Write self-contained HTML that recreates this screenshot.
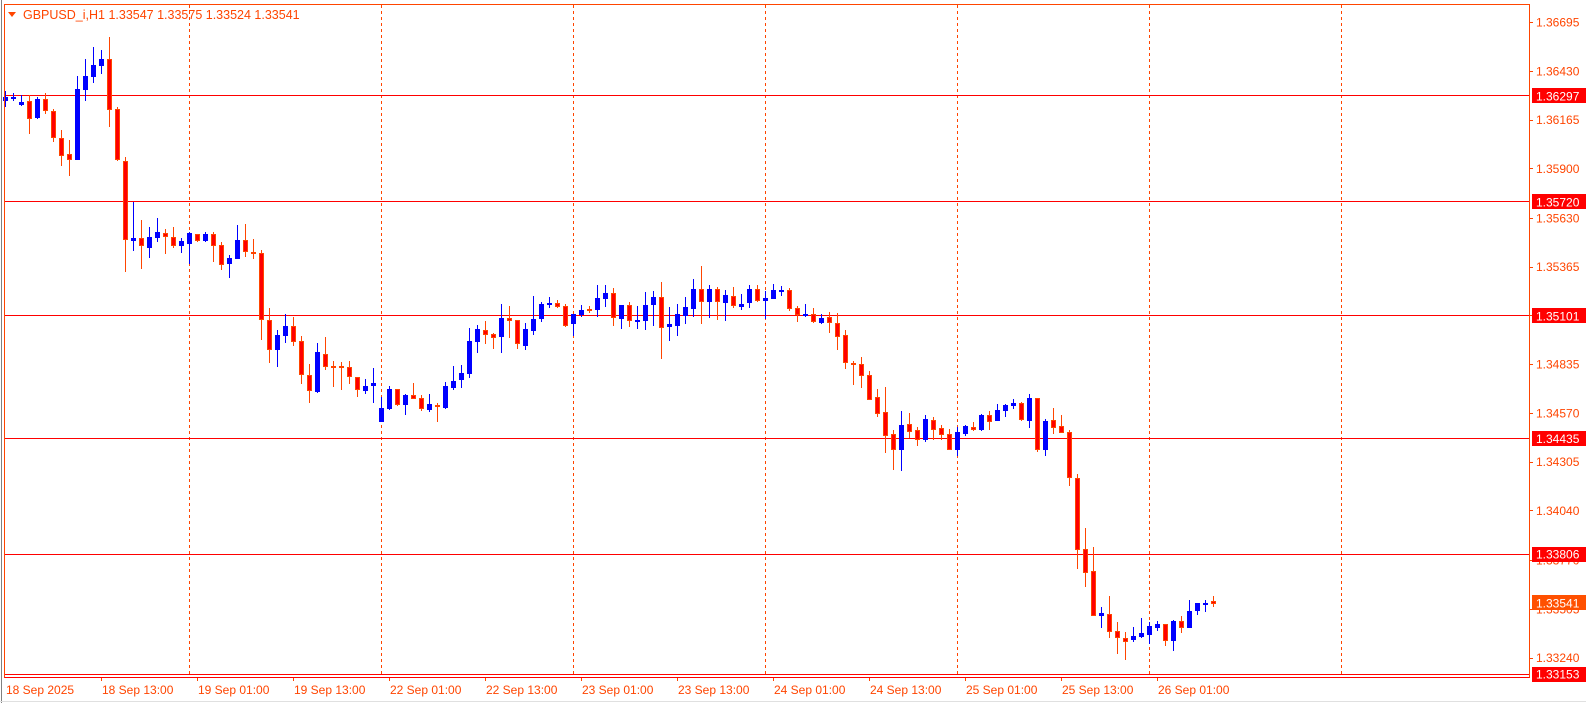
<!DOCTYPE html>
<html><head><meta charset="utf-8"><style>
html,body{margin:0;padding:0;background:#fff;width:1586px;height:703px;overflow:hidden}
svg{display:block}
text{font-family:"Liberation Sans",sans-serif;font-size:12px}
</style></head><body>
<svg id="s" width="1586" height="703" viewBox="0 0 1586 703" xmlns="http://www.w3.org/2000/svg">
<rect x="0" y="0" width="1586" height="703" fill="#fff"/>
<line x1="1.5" y1="0" x2="1.5" y2="703" stroke="#808080"/>
<line x1="0" y1="701.5" x2="1586" y2="701.5" stroke="#e0e0e0"/>
<g stroke="#ff4500" stroke-dasharray="3,3">
<line x1="189.5" y1="5" x2="189.5" y2="677"/><line x1="381.5" y1="5" x2="381.5" y2="677"/>
<line x1="573.5" y1="5" x2="573.5" y2="677"/><line x1="765.5" y1="5" x2="765.5" y2="677"/>
<line x1="957.5" y1="5" x2="957.5" y2="677"/><line x1="1149.5" y1="5" x2="1149.5" y2="677"/>
<line x1="1341.5" y1="5" x2="1341.5" y2="677"/>
</g>
<g stroke="#ff0000">
<line x1="5" y1="95.5" x2="1529" y2="95.5"/><line x1="5" y1="201.5" x2="1529" y2="201.5"/>
<line x1="5" y1="315.5" x2="1529" y2="315.5"/><line x1="5" y1="438.5" x2="1529" y2="438.5"/>
<line x1="5" y1="554.5" x2="1529" y2="554.5"/><line x1="5" y1="674.5" x2="1529" y2="674.5"/>
</g>
<g id="c"></g>
<rect x="4.5" y="4.5" width="1525" height="673" fill="none" stroke="#ff4500"/>
<line x1="4.5" y1="677.5" x2="1529.5" y2="677.5" stroke="#ff0000"/>
<polygon points="8,12 16,12 12,17" fill="#ff4500"/>
<text x="23" y="19" fill="#ff4500" style="font-size:12.5px">GBPUSD_i,H1  1.33547 1.33575 1.33524 1.33541</text>
<g id="ax" fill="#ff4500"></g>
<g id="bx" fill="#ff4500"></g>
</svg>
<script>
var NS="http://www.w3.org/2000/svg",g=document.getElementById('c');
function el(p,t,a){var e=document.createElementNS(NS,t);for(var k in a)e.setAttribute(k,a[k]);p.appendChild(e);return e;}
var B=[[0,97,101,91,107],[1,97,98,93,101],[2,102,105,95,106],[4,99,118,97,119],[9,89,160,76,160],[10,76,90,59,101],[11,65,77,47,83],[12,59,66,50,74],[16,238,241,202,251],[18,237,248,227,258],[19,232,238,218,242],[22,241,246,238,253],[23,233,244,232,264],[25,234,241,232,242],[28,258,264,255,278],[29,240,259,225,259],[34,335,350,330,367],[35,326,336,314,343],[39,352,392,343,393],[45,386,391,379,394],[46,383,386,368,403],[47,408,422,397,422],[48,389,409,386,410],[50,395,405,394,415],[53,404,410,394,412],[55,386,408,382,409],[56,381,388,366,390],[57,373,380,365,388],[58,341,374,328,378],[59,329,342,325,353],[62,318,337,304,353],[65,329,346,323,350],[66,319,331,296,335],[67,304,319,302,322],[68,303,305,297,308],[71,314,324,314,336],[72,310,315,305,317],[74,298,310,285,317],[75,293,299,285,307],[77,305,319,305,329],[79,320,321,306,329],[80,305,321,292,330],[81,297,305,291,326],[83,324,327,307,341],[84,314,326,304,336],[85,307,316,297,324],[86,289,309,279,317],[88,289,302,285,318],[90,295,303,290,321],[92,304,307,294,310],[93,289,303,285,308],[95,298,301,291,319],[96,290,299,284,299],[97,290,292,286,296],[100,314,316,304,317],[102,318,323,314,324],[112,425,450,411,471],[115,419,440,415,442],[119,432,450,427,456],[120,426,434,425,436],[122,415,430,414,431],[124,410,421,404,421],[125,405,411,404,417],[126,403,406,399,409],[128,398,421,394,428],[130,421,450,419,456],[137,613,616,607,628],[141,636,640,627,642],[142,633,637,618,638],[143,626,635,622,644],[144,624,628,621,631],[146,621,641,620,651],[148,611,628,600,628],[149,603,611,603,615],[150,603,604,600,612]];
var R=[[3,101,119,95,134],[5,99,111,93,114],[6,111,138,109,142],[7,138,156,130,166],[8,154,160,140,176],[13,59,110,37,127],[14,109,160,107,161],[15,161,240,157,272],[17,238,246,220,269],[20,233,237,229,254],[21,237,246,227,248],[24,234,241,234,242],[26,234,246,232,262],[27,245,265,242,270],[30,240,252,224,257],[31,252,254,239,259],[32,253,320,250,340],[33,320,350,308,363],[36,326,342,317,346],[37,341,375,336,384],[38,375,391,364,403],[40,354,367,337,370],[41,366,367,361,387],[42,366,367,362,390],[43,367,377,361,384],[44,377,390,377,397],[49,389,405,389,406],[51,395,399,383,399],[52,398,409,395,411],[54,405,407,403,422],[60,330,335,321,344],[61,334,338,333,349],[63,318,321,306,338],[64,320,344,320,349],[69,303,307,300,308],[70,306,326,304,327],[73,309,310,306,313],[76,293,318,288,326],[78,305,321,302,327],[82,297,328,282,359],[87,289,302,266,324],[89,289,302,287,320],[91,296,306,287,308],[94,289,301,285,302],[98,290,309,288,311],[99,308,315,306,322],[101,314,322,308,323],[103,317,323,312,333],[104,323,337,313,350],[105,335,363,330,369],[106,363,364,361,385],[107,364,376,357,388],[108,375,400,371,400],[109,397,414,389,417],[110,412,436,387,453],[111,434,450,430,470],[113,424,432,413,438],[114,430,440,427,446],[116,420,430,417,440],[117,428,435,425,440],[118,434,450,429,450],[121,427,430,422,431],[123,415,422,411,430],[127,403,420,402,421],[129,398,450,398,452],[131,420,428,408,434],[132,426,433,415,433],[133,432,478,430,486],[134,478,550,474,569],[135,549,573,528,587],[136,571,616,547,616],[138,614,632,596,638],[139,631,638,622,654],[140,638,642,632,660],[145,624,641,624,646],[147,621,628,616,633],[151,601,604,596,607]];
B.forEach(function(d){var c=5.5+8*d[0];el(g,'line',{x1:c,x2:c,y1:d[3],y2:d[4],stroke:'#0000ff'});el(g,'rect',{x:c-2.5,y:d[1],width:5,height:Math.max(2,d[2]-d[1]),fill:'#0000ff'});});
R.forEach(function(d){var c=5.5+8*d[0];el(g,'line',{x1:c,x2:c,y1:d[3],y2:d[4],stroke:'#ff4500'});var h=d[2]-d[1];if(h<2){el(g,'rect',{x:c-2.5,y:d[1],width:5,height:2,fill:'#ff4500'});}else{el(g,'rect',{x:c-2,y:d[1]+0.5,width:4,height:h-1,fill:'#ff0000',stroke:'#ff4500'});}});
var ax=document.getElementById('ax');
function py(p){return 95.3+(1.36297-p)*18395;}
['1.36695','1.36430','1.36165','1.35900','1.35630','1.35365','1.35100','1.34835','1.34570','1.34305','1.34040','1.33770','1.33505','1.33240'].forEach(function(v){var y=py(parseFloat(v));el(ax,'rect',{x:1529,y:Math.round(y),width:4,height:1});var t=el(ax,'text',{x:1536,y:y+4.5});t.textContent=v;});
function lab(v,bg){var y=py(parseFloat(v));el(ax,'rect',{x:1532,y:Math.round(y)-7,width:54,height:15,fill:bg});var t=el(ax,'text',{x:1536,y:y+5,fill:'#fff'});t.textContent=v;}
lab('1.36297','#ff0000');lab('1.35720','#ff0000');lab('1.35101','#ff0000');lab('1.34435','#ff0000');lab('1.33806','#ff0000');lab('1.33541','#ff5000');lab('1.33153','#ff0000');
var bx=document.getElementById('bx');
var L=['18 Sep 2025','18 Sep 13:00','19 Sep 01:00','19 Sep 13:00','22 Sep 01:00','22 Sep 13:00','23 Sep 01:00','23 Sep 13:00','24 Sep 01:00','24 Sep 13:00','25 Sep 01:00','25 Sep 13:00','26 Sep 01:00'];
L.forEach(function(s,i){var x=i==0?5:5+96*i;if(i>0)el(bx,'rect',{x:x,y:678,width:1,height:3});var t=el(bx,'text',{x:x+1,y:694});t.textContent=s;});
</script>
</body></html>
